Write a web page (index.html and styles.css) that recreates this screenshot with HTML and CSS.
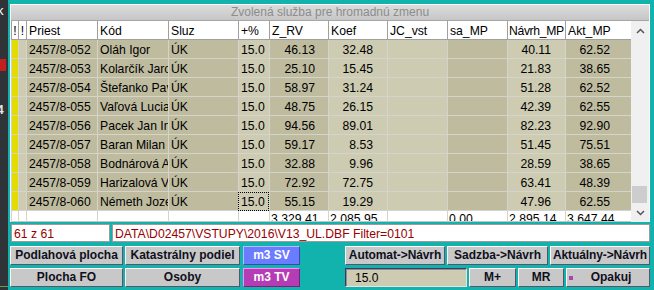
FILE: index.html
```html
<!DOCTYPE html>
<html lang="sk">
<head>
<meta charset="utf-8">
<title>Zvolená služba pre hromadnú zmenu</title>
<link rel="stylesheet" href="styles.css">
</head>
<body>
<div class="desk">
  <div class="strip">
    <span class="frag-k">k</span>
    <span class="frag-red"></span>
    <span class="frag-4">4</span>
    <span class="frag-green"></span>
  </div>
  <div class="win">
    <div class="gridframe">
      <div class="title">Zvolená služba pre hromadnú zmenu</div>
      <div class="gridbody">
        <div class="table">
          <div class="h c">!</div><div class="h c">!</div><div class="h">Priest</div><div class="h">Kód</div><div class="h">Sluz</div><div class="h">+%</div><div class="h">Z_RV</div><div class="h">Koef</div><div class="h">JC_vst</div><div class="h">sa_MP</div><div class="h tight">Návrh_MP</div><div class="h">Akt_MP</div>

          <div class="y"></div><div class="l"></div><div class="d">2457/8-052</div><div class="d">Oláh Igor</div><div class="d">ÚK</div><div class="l">15.0</div><div class="d n13">46.13</div><div class="l n14">32.48</div><div class="l"></div><div class="d"></div><div class="l n14">40.11</div><div class="d n21">62.52</div>
          <div class="y"></div><div class="l"></div><div class="d">2457/8-053</div><div class="d">Kolarčík Jaroslav</div><div class="d">ÚK</div><div class="l">15.0</div><div class="d n13">25.10</div><div class="l n14">15.45</div><div class="l"></div><div class="d"></div><div class="l n14">21.83</div><div class="d n21">38.65</div>
          <div class="y"></div><div class="l"></div><div class="d">2457/8-054</div><div class="d">Štefanko Pavol</div><div class="d">ÚK</div><div class="l">15.0</div><div class="d n13">58.97</div><div class="l n14">31.24</div><div class="l"></div><div class="d"></div><div class="l n14">51.28</div><div class="d n21">62.52</div>
          <div class="y"></div><div class="l"></div><div class="d">2457/8-055</div><div class="d">Vaľová Lucia</div><div class="d">ÚK</div><div class="l">15.0</div><div class="d n13">48.75</div><div class="l n14">26.15</div><div class="l"></div><div class="d"></div><div class="l n14">42.39</div><div class="d n21">62.55</div>
          <div class="y"></div><div class="l"></div><div class="d">2457/8-056</div><div class="d">Pacek Jan Ing.</div><div class="d">ÚK</div><div class="l">15.0</div><div class="d n13">94.56</div><div class="l n14">89.01</div><div class="l"></div><div class="d"></div><div class="l n14">82.23</div><div class="d n21">92.90</div>
          <div class="y"></div><div class="l"></div><div class="d">2457/8-057</div><div class="d">Baran Milan</div><div class="d">ÚK</div><div class="l">15.0</div><div class="d n13">59.17</div><div class="l n14">8.53</div><div class="l"></div><div class="d"></div><div class="l n14">51.45</div><div class="d n21">75.51</div>
          <div class="y"></div><div class="l"></div><div class="d">2457/8-058</div><div class="d">Bodnárová Anna</div><div class="d">ÚK</div><div class="l">15.0</div><div class="d n13">32.88</div><div class="l n14">9.96</div><div class="l"></div><div class="d"></div><div class="l n14">28.59</div><div class="d n21">38.65</div>
          <div class="y"></div><div class="l"></div><div class="d">2457/8-059</div><div class="d">Harizalová Viera</div><div class="d">ÚK</div><div class="l">15.0</div><div class="d n13">72.92</div><div class="l n14">72.75</div><div class="l"></div><div class="d"></div><div class="l n14">63.41</div><div class="d n21">48.39</div>
          <div class="y"></div><div class="l"></div><div class="d">2457/8-060</div><div class="d">Németh Jozef</div><div class="d">ÚK</div><div class="l f">15.0</div><div class="d n13">55.15</div><div class="l n14">19.29</div><div class="l"></div><div class="d"></div><div class="l n14">47.96</div><div class="d n21">62.55</div>

          <div class="t"></div><div class="t"></div><div class="t"></div><div class="t"></div><div class="t"></div><div class="t"></div><div class="t">3 329.41</div><div class="t">2 085.95</div><div class="t"></div><div class="t">0.00</div><div class="t">2 895.14</div><div class="t">3 647.44</div>
        </div>
        <div class="vscroll">
          <div class="sb-btn"><svg width="9" height="6" viewBox="0 0 9 6"><polyline points="1,5 4.5,1.5 8,5" fill="none" stroke="#555" stroke-width="1.5"/></svg></div>
          <div class="sb-track"><div class="sb-thumb"></div></div>
          <div class="sb-btn"><svg width="9" height="6" viewBox="0 0 9 6"><polyline points="1,1 4.5,4.5 8,1" fill="none" stroke="#555" stroke-width="1.5"/></svg></div>
        </div>
      </div>
    </div>
    <div class="status">
      <div class="sbox count">61 z 61</div>
      <div class="sbox path">DATA\D02457\VSTUPY\2016\V13_UL.DBF Filter=0101</div>
    </div>
    <div class="controls">
      <div class="lgrid">
        <button class="btn">Podlahová plocha</button>
        <button class="btn">Katastrálny podiel</button>
        <button class="btn sv">m3 SV</button>
        <button class="btn">Plocha FO</button>
        <button class="btn">Osoby</button>
        <button class="btn tv">m3 TV</button>
      </div>
      <div class="rgrid">
        <div class="rrow">
          <button class="btn w100">Automat-&gt;Návrh</button>
          <button class="btn w101">Sadzba-&gt;Návrh</button>
          <button class="btn w100">Aktuálny-&gt;Návrh</button>
        </div>
        <div class="rrow">
          <div class="inp">15.0</div>
          <button class="btn w47">M+</button>
          <button class="btn w46">MR</button>
          <button class="btn opak"><span class="sq"></span><span class="lbl">Opakuj</span></button>
        </div>
      </div>
    </div>
  </div>
</div>
</body>
</html>
```
FILE: styles.css
```css
* { box-sizing: border-box; }
html, body { margin: 0; padding: 0; }
body {
  width: 654px;
  height: 290px;
  overflow: hidden;
  background: #13b3ad;
  font-family: "Liberation Sans", Arial, sans-serif;
}
.desk { display: flex; height: 290px; }

.strip {
  width: 8px;
  flex: none;
  margin-right: 2px;
  background: #2f3438;
  display: flex;
  flex-direction: column;
  overflow: hidden;
}
.frag-k { color: #fff; font-size: 13px; line-height: 14px; height: 14px; margin: 4px 0 0 -3px; }
.frag-red { display: block; width: 6px; height: 12px; background: #c21f1f; margin-top: 41px; }
.frag-4 { color: #e6e6e6; font-size: 12px; font-weight: bold; line-height: 13px; height: 13px; margin: 33px 0 0 -3px; }
.frag-green { display: block; height: 1px; background: #5aa05a; margin-top: auto; margin-bottom: 3px; }

.win {
  width: 640px;
  flex: none;
  display: flex;
  flex-direction: column;
  padding-top: 4px;
}

.gridframe {
  height: 218px;
  border-top: 1px solid #fff;
  border-left: 1px solid #fff;
  border-right: 1px solid #fff;
  background: #f0f0f0;
  display: flex;
  flex-direction: column;
}
.title {
  height: 16px;
  border-bottom: 1px solid #a6a6a6;
  background: linear-gradient(#dcdcdc, #c6c6c6);
  color: #8c8c8c;
  font-size: 12px;
  line-height: 15px;
  text-align: center;
  white-space: nowrap;
}
.gridbody { display: flex; height: 201px; }

.table {
  width: 620px;
  flex: none;
  display: grid;
  grid-template-columns: 7px 8px 71px 71px 70px 31px 59px 59px 60px 60px 58px 66px;
  grid-template-rows: 19px repeat(9, 19px) 11px;
  font-size: 12.2px;
  color: #000;
}
.table > div {
  overflow: hidden;
  white-space: nowrap;
  border-left: 1px solid #d5d4cc;
  border-bottom: 1px solid #d5d4cc;
  line-height: 21px;
  padding-left: 2px;
}
.table > .h {
  background: #fff;
  border-left-color: #a0a0a0;
  border-bottom-color: #a0a0a0;
}
.table > .c { padding: 0; text-align: center; }
.table > .tight { padding-left: 1px; letter-spacing: -0.35px; }
.y { background: #e2dc00; }
.l { background: #cdcbb1; }
.d { background: #bebb9f; }
.n13 { text-align: right; padding-right: 13px; }
.n14 { text-align: right; padding-right: 14px; }
.n21 { text-align: right; padding-right: 21px; }
.f { outline: 1px dotted #000; outline-offset: -1px; }
.table > .t {
  background: #fff;
  line-height: 17px;
  padding-left: 1px;
  border-bottom-color: #c4c4c4;
}

.vscroll {
  width: 18px;
  flex: none;
  display: flex;
  flex-direction: column;
  background: #f0f0f0;
}
.sb-btn { height: 19px; display: flex; align-items: center; justify-content: center; }
.sb-track { flex: 1; display: flex; flex-direction: column; justify-content: flex-end; }
.sb-thumb { height: 17px; margin: 0 2px 0 1px; background: #cdcdcd; }

.status {
  display: flex;
  gap: 2px;
  height: 18px;
  margin-top: 2px;
  padding-left: 1px;
}
.sbox {
  height: 18px;
  border: 1px solid #9c9c9c;
  background: #fff;
  color: #990000;
  font-size: 12.2px;
  line-height: 16px;
  padding: 1px 0 0 2px;
  white-space: nowrap;
  overflow: hidden;
}
.count { width: 99px; flex: none; }
.path { flex: 1; }

.controls { display: flex; gap: 45px; margin-top: 4px; }
.lgrid {
  display: grid;
  grid-template-columns: 113px 115px 58px;
  grid-template-rows: 19px 19px;
  column-gap: 2px;
  row-gap: 3px;
}
.rgrid { width: 305px; display: flex; flex-direction: column; gap: 3px; }
.rrow { display: flex; gap: 2px; height: 19px; }

.btn {
  font-family: "Liberation Sans", Arial, sans-serif;
  font-size: 12px;
  font-weight: bold;
  color: #10101c;
  background: #c8c8c8;
  border: 1px solid;
  border-color: #fff #56566a #56566a #fff;
  padding: 0;
  margin: 0;
  height: 19px;
  line-height: 17px;
  white-space: nowrap;
  overflow: hidden;
  text-align: center;
}
.sv {
  margin-left: 1px;
  background: #6a7cff;
  color: #fff;
  border-color: #b4bcff #3a48b0 #3a48b0 #b4bcff;
}
.tv {
  margin-left: 1px;
  background: #b43cb4;
  color: #fff;
  border-color: #ff8cff #7a207a #7a207a #ff8cff;
}
.w100 { width: 100px; letter-spacing: -0.1px; }
.w101 { width: 101px; }
.w47 { width: 47px; }
.w46 { width: 46px; }
.opak { width: 84px; display: flex; align-items: center; padding-left: 2px; }
.sq { width: 4px; height: 4px; background: #b040b0; flex: none; }
.lbl { flex: 1; text-align: center; }

.inp {
  width: 122px;
  height: 19px;
  background: #cdcbb1;
  border: 1px solid;
  border-color: #3c3c58 #e4e4e4 #e4e4e4 #3c3c58;
  box-shadow: inset 1px 1px 0 #8a8aa0;
  font-size: 12px;
  line-height: 15px;
  padding: 2px 0 0 9px;
  color: #000;
}
```
